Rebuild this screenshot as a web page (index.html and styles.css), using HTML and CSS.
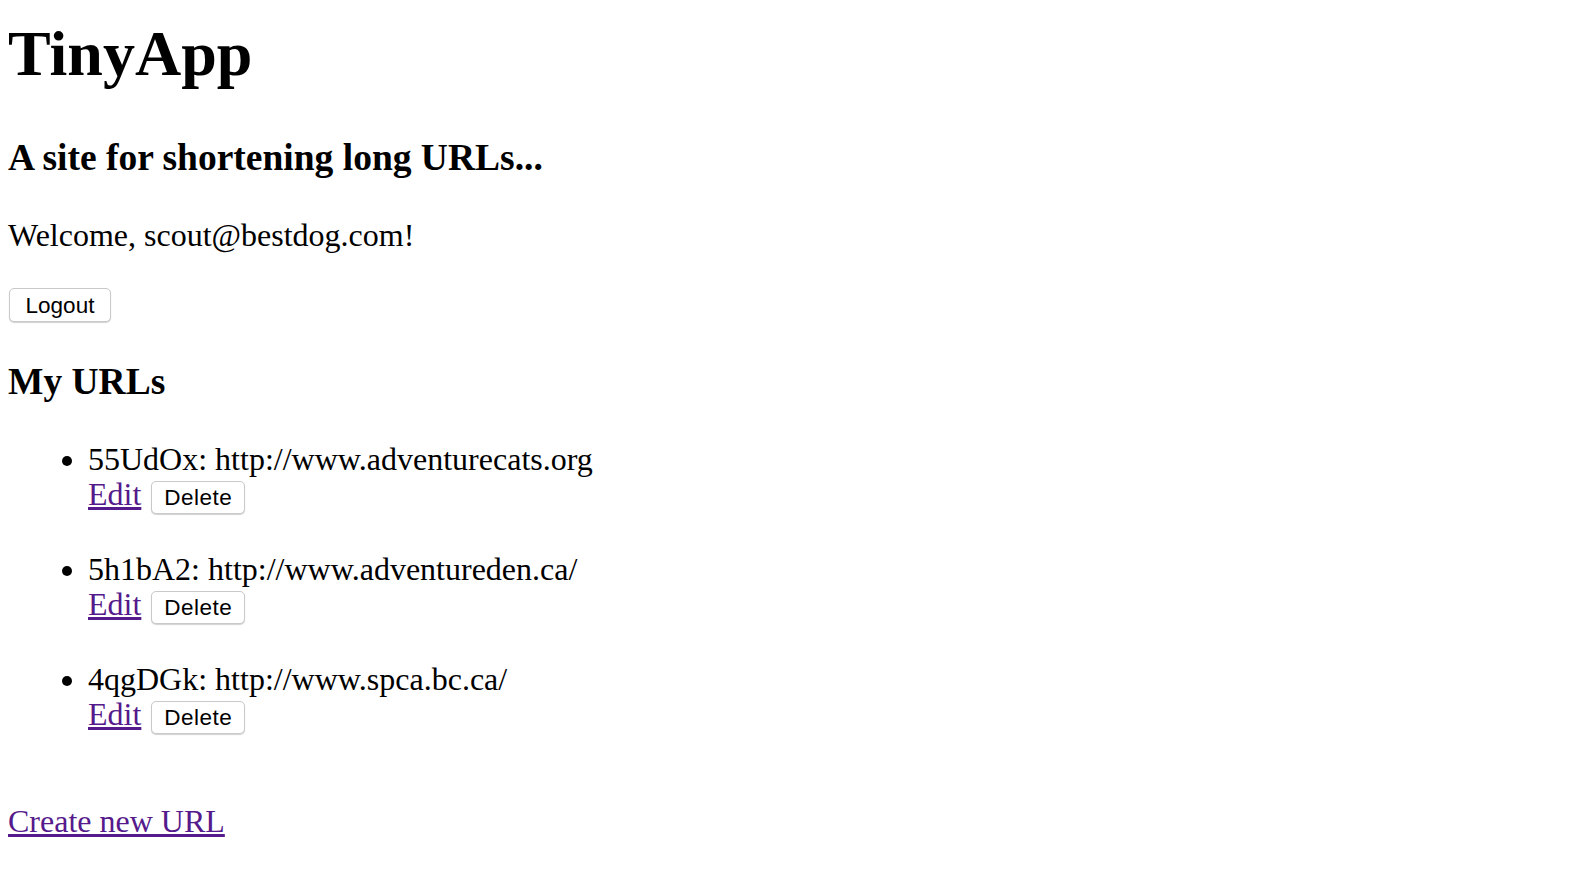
FILE: index.html
```html
<!DOCTYPE html>
<html lang="en">
<head>
<meta charset="utf-8">
<title>TinyApp</title>
<link rel="stylesheet" href="styles.css">
</head>
<body>
<div class="page">
  <h1 class="title">TinyApp</h1>
  <h3 class="heading">A site for shortening long URLs...</h3>
  <p class="welcome">Welcome, scout@bestdog.com!</p>
  <form class="logout-form">
    <button type="button" class="btn btn-logout">Logout</button>
  </form>
  <h3 class="heading heading-urls">My URLs</h3>
  <ul class="url-list">
    <li class="url-item">
      <div class="url-line">55UdOx: http://www.adventurecats.org</div>
      <div class="actions">
        <a class="link" href="#">Edit</a>
        <button type="button" class="btn btn-delete">Delete</button>
      </div>
    </li>
    <li class="url-item">
      <div class="url-line">5h1bA2: http://www.adventureden.ca/</div>
      <div class="actions">
        <a class="link" href="#">Edit</a>
        <button type="button" class="btn btn-delete">Delete</button>
      </div>
    </li>
    <li class="url-item">
      <div class="url-line">4qgDGk: http://www.spca.bc.ca/</div>
      <div class="actions">
        <a class="link" href="#">Edit</a>
        <button type="button" class="btn btn-delete">Delete</button>
      </div>
    </li>
  </ul>
  <p class="create"><a class="link" href="#">Create new URL</a></p>
</div>
</body>
</html>
```

FILE: styles.css
```css
html, body {
  margin: 0;
  padding: 0;
  background: #ffffff;
}

body {
  font-family: "Liberation Serif", "Times New Roman", serif;
  font-size: 32px;
  color: #000000;
}

.page {
  padding: 0 8px;
  display: flow-root;
}

.title {
  font-size: 64px;
  font-weight: bold;
  line-height: 74px;
  margin: 17px 0 0;
}

.heading {
  font-size: 37.5px;
  font-weight: bold;
  line-height: 43px;
  margin: 45px 0 0;
}

.heading-urls {
  margin-top: 38px;
}

.welcome {
  margin: 38px 0 0;
  line-height: 37px;
}

.logout-form {
  margin: 34px 0 0;
  display: flex;
}

.btn {
  font-family: "Liberation Sans", Arial, Helvetica, sans-serif;
  font-size: 22.5px;
  line-height: 23px;
  height: 33px;
  padding: 4px 0;
  margin: 0;
  color: #000000;
  background: #ffffff;
  border: 1px solid #c9c9c9;
  border-radius: 5px;
  box-shadow: 0 1px 1px rgba(0, 0, 0, 0.18);
  text-align: center;
  box-sizing: border-box;
}

.btn-logout {
  width: 102px;
  height: 34px;
  margin-left: 1px;
}

.btn-delete {
  width: 94px;
  letter-spacing: 0.5px;
}

.url-list {
  margin: 38px 0 0;
  padding-left: 80px;
  list-style: disc;
}

.url-item {
  margin-bottom: 39px;
}

.url-item:last-child {
  margin-bottom: 0;
}

.url-line {
  line-height: 36px;
}

.actions {
  display: flex;
  align-items: baseline;
  gap: 10px;
  height: 35px;
  line-height: 35px;
}

.link {
  color: #551a8b;
  text-decoration: underline;
}

.create {
  margin: 71px 0 0;
  line-height: 37px;
}
```
